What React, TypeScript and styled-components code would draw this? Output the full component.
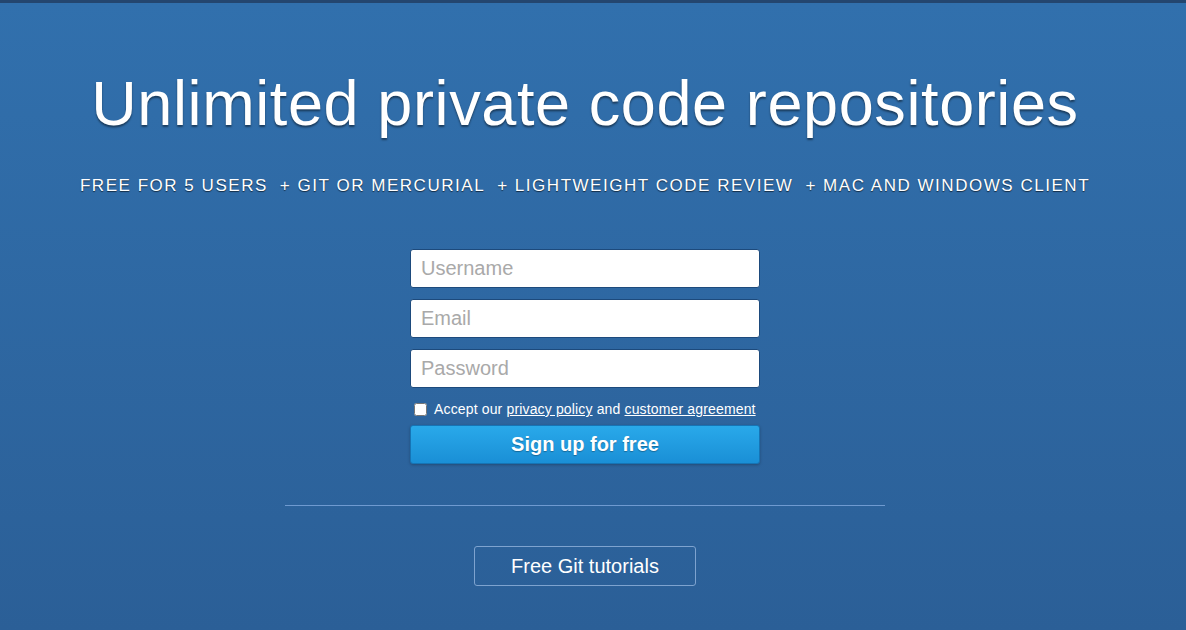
import React from "react";
import styled, { createGlobalStyle } from "styled-components";

const Global = createGlobalStyle`
  html, body { margin: 0; padding: 0; }
  body { font-family: "Liberation Sans", Arial, sans-serif; }
`;

const Page = styled.div`
  height: 630px;
  box-sizing: border-box;
  padding-right: 16px;
  border-top: 3px solid #24466f;
  background: linear-gradient(180deg, #3170ad 0%, #2b5f97 100%);
  display: flex;
  flex-direction: column;
  align-items: center;
  color: #fff;
  overflow: hidden;
`;

const Title = styled.h1`
  margin: 64px 0 0;
  font-size: 63px;
  line-height: 72px;
  font-weight: 400;
  letter-spacing: 0.6px;
  white-space: nowrap;
  text-shadow: 0 2px 2px rgba(0, 0, 0, 0.45);
`;

const Features = styled.ul`
  list-style: none;
  margin: 36px 0 0;
  padding: 0;
  display: flex;
  gap: 12px;
  font-size: 17px;
  line-height: 22px;
  letter-spacing: 1.53px;
  white-space: nowrap;
  text-transform: uppercase;
  text-shadow: 0 1px 1px rgba(0, 0, 0, 0.6);
`;

const Feature = styled.li``;

const Form = styled.form`
  margin-top: 52px;
  width: 350px;
  display: flex;
  flex-direction: column;
  gap: 11px;
`;

const Input = styled.input`
  box-sizing: border-box;
  width: 350px;
  height: 39px;
  border: 1px solid #1d4a7c;
  border-radius: 3px;
  background: #fff;
  padding: 0 10px;
  font-family: "Liberation Sans", Arial, sans-serif;
  font-size: 20px;
  color: #333;
  &::placeholder { color: #a9a9a9; }
`;

const Terms = styled.label`
  display: flex;
  align-items: center;
  gap: 7px;
  font-size: 14px;
  line-height: 18px;
  letter-spacing: 0.15px;
  margin: 1px 0 -4px 4px;
`;

const Check = styled.input`
  margin: 0;
  width: 13px;
  height: 13px;
`;

const Link = styled.a`
  color: #fff;
  text-decoration: underline;
`;

const Submit = styled.button`
  box-sizing: border-box;
  width: 350px;
  height: 39px;
  border: 1px solid #1674b5;
  border-radius: 3px;
  background: linear-gradient(180deg, #29a9ea 0%, #1a8fd6 100%);
  color: #fff;
  font-family: "Liberation Sans", Arial, sans-serif;
  font-size: 20px;
  font-weight: 700;
  text-shadow: 0 1px 1px rgba(0, 0, 0, 0.3);
  box-shadow: 0 1px 3px rgba(0, 0, 0, 0.25);
`;

const Divider = styled.hr`
  width: 600px;
  margin: 41px 0 0;
  border: 0;
  border-top: 1px solid #6f9ad0;
`;

const Tutorials = styled.a`
  margin-top: 40px;
  box-sizing: border-box;
  width: 222px;
  height: 40px;
  border: 1px solid #7ea3cf;
  border-radius: 3px;
  display: flex;
  align-items: center;
  justify-content: center;
  color: #fff;
  font-size: 20px;
  text-decoration: none;
`;

export default function App() {
  return (
    <>
      <Global />
      <Page>
        <Title>Unlimited private code repositories</Title>
        <Features>
          <Feature>Free for 5 users</Feature>
          <Feature>+ Git or Mercurial</Feature>
          <Feature>+ Lightweight code review</Feature>
          <Feature>+ Mac and Windows client</Feature>
        </Features>
        <Form onSubmit={(e) => e.preventDefault()}>
          <Input placeholder="Username" />
          <Input placeholder="Email" type="email" />
          <Input placeholder="Password" type="password" />
          <Terms>
            <Check type="checkbox" />
            <span>
              Accept our <Link href="#">privacy policy</Link> and{" "}
              <Link href="#">customer agreement</Link>
            </span>
          </Terms>
          <Submit type="submit">Sign up for free</Submit>
        </Form>
        <Divider />
        <Tutorials href="#">Free Git tutorials</Tutorials>
      </Page>
    </>
  );
}
